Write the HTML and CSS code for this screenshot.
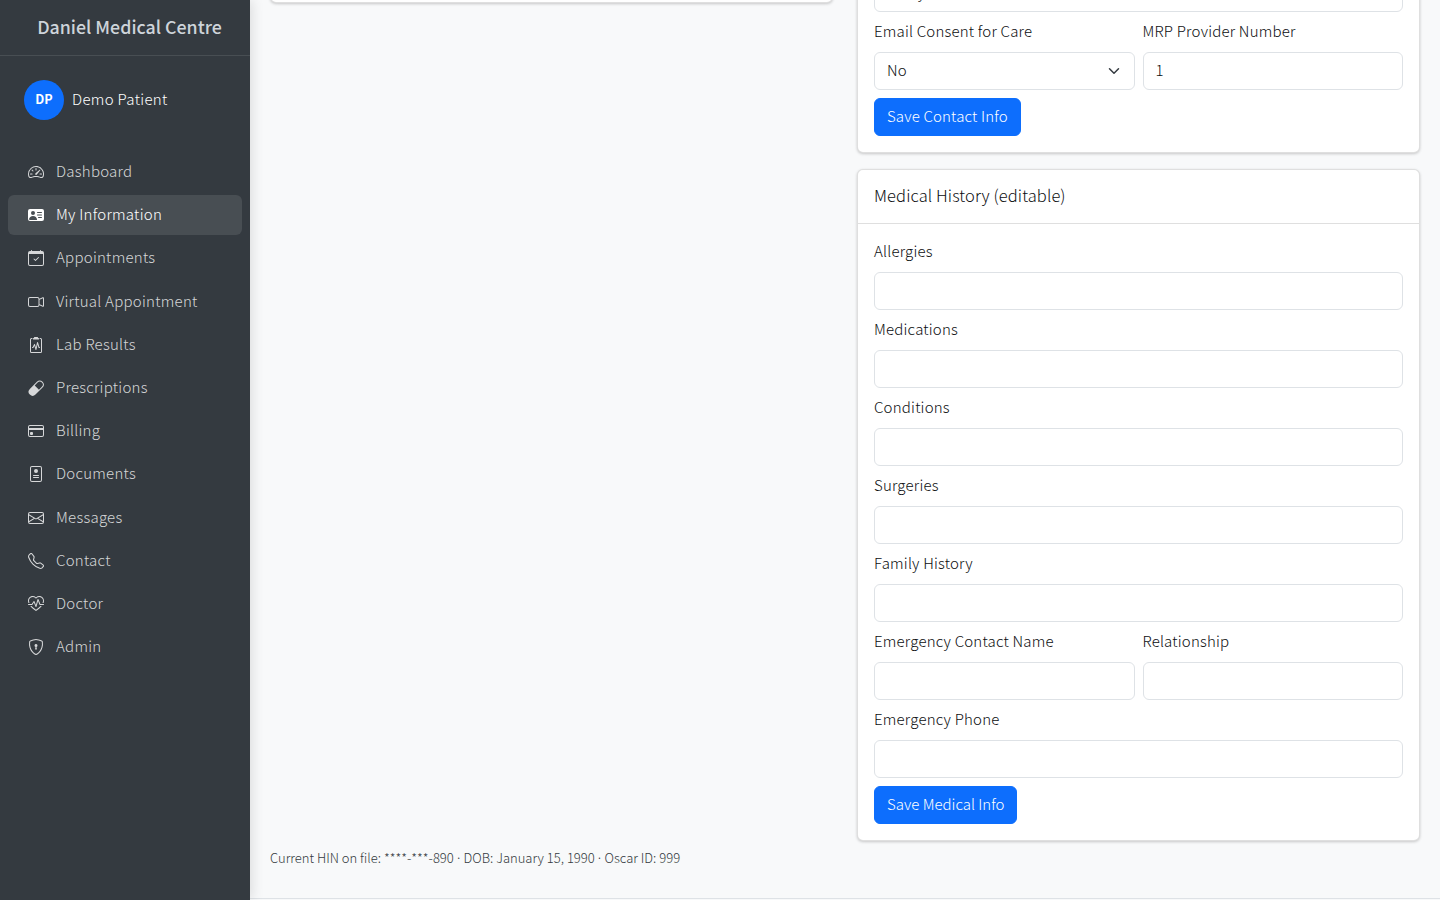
FILE: index.html
```html
<!DOCTYPE html>
<html lang="en">
<head>
    <meta charset="UTF-8">
    <meta name="viewport" content="width=device-width, initial-scale=1.0">
    <title>My Information</title>
    <link rel="stylesheet" href="styles.css">
</head>
<body>
    <aside class="sidebar">
        <div class="brand">Daniel Medical Centre</div>
        <div class="user">
            <div class="avatar">DP</div>
            <span class="user-name">Demo Patient</span>
        </div>
        <nav class="nav">
            <a class="nav-link" href="#">
                <svg class="icon" viewBox="0 0 16 16"><path d="M8 4a.5.5 0 0 1 .5.5V6a.5.5 0 0 1-1 0V4.5A.5.5 0 0 1 8 4zM3.732 5.732a.5.5 0 0 1 .707 0l.915.914a.5.5 0 1 1-.708.708l-.914-.915a.5.5 0 0 1 0-.707zM2 10a.5.5 0 0 1 .5-.5h1.586a.5.5 0 0 1 0 1H2.5A.5.5 0 0 1 2 10zm9.5 0a.5.5 0 0 1 .5-.5h1.5a.5.5 0 0 1 0 1H12a.5.5 0 0 1-.5-.5zm.754-4.246a.389.389 0 0 0-.527-.02L7.547 9.31a.91.91 0 1 0 1.302 1.258l3.434-4.297a.389.389 0 0 0-.029-.518z"/><path fill-rule="evenodd" d="M0 10a8 8 0 1 1 15.547 2.661c-.442 1.253-1.845 1.602-2.932 1.25C11.309 13.488 9.475 13 8 13c-1.474 0-3.31.488-4.615.911-1.087.352-2.49.003-2.932-1.25A7.988 7.988 0 0 1 0 10zm8-7a7 7 0 0 0-6.603 9.329c.203.575.923.876 1.68.63C4.397 12.533 6.358 12 8 12s3.604.532 4.923.96c.757.245 1.477-.056 1.68-.631A7 7 0 0 0 8 3z"/></svg>
                Dashboard
            </a>
            <a class="nav-link active" href="#">
                <svg class="icon" viewBox="0 0 16 16"><path d="M0 4a2 2 0 0 1 2-2h12a2 2 0 0 1 2 2v8a2 2 0 0 1-2 2H2a2 2 0 0 1-2-2V4Zm9 1.5a.5.5 0 0 0 .5.5h4a.5.5 0 0 0 0-1h-4a.5.5 0 0 0-.5.5ZM9 8a.5.5 0 0 0 .5.5h4a.5.5 0 0 0 0-1h-4A.5.5 0 0 0 9 8Zm1 2.5a.5.5 0 0 0 .5.5h3a.5.5 0 0 0 0-1h-3a.5.5 0 0 0-.5.5Zm-1 2C9 10.567 7.21 9 5 9c-2.086 0-3.8 1.398-3.984 3.181A1 1 0 0 0 2 13h6.96c.026-.163.04-.33.04-.5ZM7 6a2 2 0 1 0-4 0 2 2 0 0 0 4 0Z"/></svg>
                My Information
            </a>
            <a class="nav-link" href="#">
                <svg class="icon" viewBox="0 0 16 16"><path d="M10.854 7.146a.5.5 0 0 1 0 .708l-3 3a.5.5 0 0 1-.708 0l-1.5-1.5a.5.5 0 1 1 .708-.708L7.5 9.793l2.646-2.647a.5.5 0 0 1 .708 0z"/><path d="M3.5 0a.5.5 0 0 1 .5.5V1h8V.5a.5.5 0 0 1 1 0V1h1a2 2 0 0 1 2 2v11a2 2 0 0 1-2 2H2a2 2 0 0 1-2-2V3a2 2 0 0 1 2-2h1V.5a.5.5 0 0 1 .5-.5zM1 4v10a1 1 0 0 0 1 1h12a1 1 0 0 0 1-1V4H1z"/></svg>
                Appointments
            </a>
            <a class="nav-link" href="#">
                <svg class="icon" viewBox="0 0 16 16"><path fill-rule="evenodd" d="M0 5a2 2 0 0 1 2-2h7.5a2 2 0 0 1 1.983 1.738l3.11-1.382A1 1 0 0 1 16 4.269v7.462a1 1 0 0 1-1.406.913l-3.111-1.382A2 2 0 0 1 9.5 13H2a2 2 0 0 1-2-2V5zm11.5 5.175 3.5 1.556V4.269l-3.5 1.556v4.35zM2 4a1 1 0 0 0-1 1v6a1 1 0 0 0 1 1h7.5a1 1 0 0 0 1-1V5a1 1 0 0 0-1-1H2z"/></svg>
                Virtual Appointment
            </a>
            <a class="nav-link" href="#">
                <svg class="icon" viewBox="0 0 16 16"><path d="M9.5 0a.5.5 0 0 1 .5.5.5.5 0 0 0 .5.5.5.5 0 0 1 .5.5V2a.5.5 0 0 1-.5.5h-5A.5.5 0 0 1 5 2v-.5a.5.5 0 0 1 .5-.5.5.5 0 0 0 .5-.5.5.5 0 0 1 .5-.5h3Z"/><path d="M3 2.5a.5.5 0 0 1 .5-.5H4a.5.5 0 0 0 0-1h-.5A1.5 1.5 0 0 0 2 2.5v12A1.5 1.5 0 0 0 3.5 16h9a1.5 1.5 0 0 0 1.5-1.5v-12A1.5 1.5 0 0 0 12.5 1H12a.5.5 0 0 0 0 1h.5a.5.5 0 0 1 .5.5v12a.5.5 0 0 1-.5.5h-9a.5.5 0 0 1-.5-.5v-12Z"/><path d="M9.979 5.356a.5.5 0 0 0-.968.04L7.92 10.49l-.94-3.135a.5.5 0 0 0-.926-.08L4.69 10H4.5a.5.5 0 0 0 0 1H5a.5.5 0 0 0 .447-.276l.936-1.873 1.138 3.793a.5.5 0 0 0 .968-.04L9.58 7.51l.94 3.135A.5.5 0 0 0 11 11h.5a.5.5 0 0 0 0-1h-.128L9.979 5.356Z"/></svg>
                Lab Results
            </a>
            <a class="nav-link" href="#">
                <svg class="icon" viewBox="0 0 16 16"><path d="M1.828 8.9 8.9 1.827a4 4 0 1 1 5.657 5.657l-7.07 7.071A4 4 0 1 1 1.827 8.9Zm9.128.771 2.893-2.893a3 3 0 1 0-4.243-4.242L6.713 5.429l4.243 4.242Z"/></svg>
                Prescriptions
            </a>
            <a class="nav-link" href="#">
                <svg class="icon" viewBox="0 0 16 16"><path d="M0 4a2 2 0 0 1 2-2h12a2 2 0 0 1 2 2v8a2 2 0 0 1-2 2H2a2 2 0 0 1-2-2V4zm2-1a1 1 0 0 0-1 1v1h14V4a1 1 0 0 0-1-1H2zm13 4H1v5a1 1 0 0 0 1 1h12a1 1 0 0 0 1-1V7z"/><path d="M2 10a1 1 0 0 1 1-1h1a1 1 0 0 1 1 1v1a1 1 0 0 1-1 1H3a1 1 0 0 1-1-1v-1z"/></svg>
                Billing
            </a>
            <a class="nav-link" href="#">
                <svg class="icon" viewBox="0 0 16 16"><path d="M8 7a2 2 0 1 0 0-4 2 2 0 0 0 0 4ZM5.5 9a.5.5 0 0 0 0 1h5a.5.5 0 0 0 0-1h-5zm0 2a.5.5 0 0 0 0 1h5a.5.5 0 0 0 0-1h-5z"/><path d="M2 2a2 2 0 0 1 2-2h8a2 2 0 0 1 2 2v12a2 2 0 0 1-2 2H4a2 2 0 0 1-2-2V2zm10-1H4a1 1 0 0 0-1 1v12a1 1 0 0 0 1 1h8a1 1 0 0 0 1-1V2a1 1 0 0 0-1-1z"/></svg>
                Documents
            </a>
            <a class="nav-link" href="#">
                <svg class="icon" viewBox="0 0 16 16"><path d="M0 4a2 2 0 0 1 2-2h12a2 2 0 0 1 2 2v8a2 2 0 0 1-2 2H2a2 2 0 0 1-2-2V4Zm2-1a1 1 0 0 0-1 1v.217l7 4.2 7-4.2V4a1 1 0 0 0-1-1H2Zm13 2.383-4.708 2.825L15 11.105V5.383Zm-.034 6.876-5.64-3.471L8 9.583l-1.326-.795-5.64 3.47A1 1 0 0 0 2 13h12a1 1 0 0 0 .966-.741ZM1 11.105l4.708-2.897L1 5.383v5.722Z"/></svg>
                Messages
            </a>
            <a class="nav-link" href="#">
                <svg class="icon" viewBox="0 0 16 16"><path d="M3.654 1.328a.678.678 0 0 0-1.015-.063L1.605 2.3c-.483.484-.661 1.169-.45 1.77a17.568 17.568 0 0 0 4.168 6.608 17.569 17.569 0 0 0 6.608 4.168c.601.211 1.286.033 1.77-.45l1.034-1.034a.678.678 0 0 0-.063-1.015l-2.307-1.794a.678.678 0 0 0-.58-.122l-2.19.547a1.745 1.745 0 0 1-1.657-.459L5.482 8.062a1.745 1.745 0 0 1-.46-1.657l.548-2.19a.678.678 0 0 0-.122-.58L3.654 1.328zM1.884.511a1.745 1.745 0 0 1 2.612.163L6.29 2.98c.329.423.445.974.315 1.494l-.547 2.19a.678.678 0 0 0 .178.643l2.457 2.457a.678.678 0 0 0 .644.178l2.189-.547a1.745 1.745 0 0 1 1.494.315l2.306 1.794c.829.645.905 1.87.163 2.611l-1.034 1.034c-.74.74-1.846 1.065-2.877.702a18.634 18.634 0 0 1-7.01-4.42 18.634 18.634 0 0 1-4.42-7.009c-.362-1.03-.037-2.137.703-2.877L1.885.511z"/></svg>
                Contact
            </a>
            <a class="nav-link" href="#">
                <svg class="icon" viewBox="0 0 16 16"><path d="m8 2.748-.717-.737C5.6.281 2.514.878 1.4 3.053.918 3.995.78 5.323 1.508 7H.43c-2.128-5.697 4.165-8.83 7.394-5.857.06.055.119.112.176.171a3.12 3.12 0 0 1 .176-.17c3.23-2.974 9.522.159 7.394 5.856h-1.078c.728-1.677.59-3.005.108-3.947C13.486.878 10.4.28 8.717 2.01L8 2.748ZM2.212 10h1.315C4.593 11.183 6.05 12.458 8 13.795c1.949-1.337 3.407-2.612 4.473-3.795h1.315c-1.265 1.566-3.14 3.25-5.788 5-2.648-1.75-4.523-3.434-5.788-5Z"/><path d="M10.464 3.314a.5.5 0 0 0-.945.049L7.921 8.956 6.464 5.314a.5.5 0 0 0-.88-.091L3.732 8H.5a.5.5 0 0 0 0 1H4a.5.5 0 0 0 .416-.223l1.473-2.209 1.647 4.118a.5.5 0 0 0 .945-.049l1.598-5.593 1.457 3.642A.5.5 0 0 0 12 9h3.5a.5.5 0 0 0 0-1h-3.162l-1.874-4.686Z"/></svg>
                Doctor
            </a>
            <a class="nav-link" href="#">
                <svg class="icon" viewBox="0 0 16 16"><path d="M5.338 1.59a61.44 61.44 0 0 0-2.837.856.481.481 0 0 0-.328.39c-.554 4.157.726 7.19 2.253 9.188a10.725 10.725 0 0 0 2.287 2.233c.346.244.652.42.893.533.12.057.218.095.293.118a.55.55 0 0 0 .101.025.615.615 0 0 0 .1-.025c.076-.023.174-.061.294-.118.24-.113.547-.29.893-.533a10.726 10.726 0 0 0 2.287-2.233c1.527-1.997 2.807-5.031 2.253-9.188a.48.48 0 0 0-.328-.39c-.651-.213-1.75-.56-2.837-.855C9.552 1.29 8.531 1.067 8 1.067c-.53 0-1.552.223-2.662.524zM5.072.56C6.157.265 7.31 0 8 0s1.843.265 2.928.56c1.11.3 2.229.655 2.887.87a1.54 1.54 0 0 1 1.044 1.262c.596 4.477-.787 7.795-2.465 9.99a11.775 11.775 0 0 1-2.517 2.453 7.159 7.159 0 0 1-1.048.625c-.28.132-.581.24-.829.24s-.548-.108-.829-.24a7.158 7.158 0 0 1-1.048-.625 11.777 11.777 0 0 1-2.517-2.453C1.928 10.487.545 7.169 1.141 2.692A1.54 1.54 0 0 1 2.185 1.43 62.456 62.456 0 0 1 5.072.56z"/><path d="M9.5 6.5a1.5 1.5 0 0 1-1 1.415l.385 1.99a.5.5 0 0 1-.491.595h-.788a.5.5 0 0 1-.49-.595l.384-1.99a1.5 1.5 0 1 1 2-1.415z"/></svg>
                Admin
            </a>
        </nav>
    </aside>

    <main class="main">
        <div class="columns">
            <div class="column">
                <div class="card card-left"></div>
            </div>
            <div class="column">
                <div class="card card-contact">
                    <div class="card-body">
                        <input class="field cut-field" type="text" value="Emily" readonly>
                        <div class="row">
                            <div class="group">
                                <label class="label">Email Consent for Care</label>
                                <div class="select">
                                    <span>No</span>
                                    <svg class="chevron" viewBox="0 0 16 16"><path fill="none" stroke="#343a40" stroke-linecap="round" stroke-linejoin="round" stroke-width="2" d="m2 5 6 6 6-6"/></svg>
                                </div>
                            </div>
                            <div class="group">
                                <label class="label">MRP Provider Number</label>
                                <input class="field" type="text" value="1" readonly>
                            </div>
                        </div>
                        <button class="btn btn-contact">Save Contact Info</button>
                    </div>
                </div>
                <div class="card">
                    <div class="card-header">Medical History (editable)</div>
                    <div class="card-body">
                        <div class="group">
                            <label class="label">Allergies</label>
                            <input class="field" type="text">
                        </div>
                        <div class="group">
                            <label class="label">Medications</label>
                            <input class="field" type="text">
                        </div>
                        <div class="group">
                            <label class="label">Conditions</label>
                            <input class="field" type="text">
                        </div>
                        <div class="group">
                            <label class="label">Surgeries</label>
                            <input class="field" type="text">
                        </div>
                        <div class="group">
                            <label class="label">Family History</label>
                            <input class="field" type="text">
                        </div>
                        <div class="row">
                            <div class="group">
                                <label class="label">Emergency Contact Name</label>
                                <input class="field" type="text">
                            </div>
                            <div class="group">
                                <label class="label">Relationship</label>
                                <input class="field" type="text">
                            </div>
                        </div>
                        <div class="group">
                            <label class="label">Emergency Phone</label>
                            <input class="field" type="text">
                        </div>
                        <button class="btn">Save Medical Info</button>
                    </div>
                </div>
            </div>
        </div>
        <p class="hin-note">Current HIN on file: ****-***-890 <span class="dot">·</span> DOB: January 15, 1990 <span class="dot">·</span> Oscar ID: 999</p>
    </main>
</body>
</html>
```

FILE: styles.css
```css
* {
    box-sizing: border-box;
}
html, body {
    height: 100%;
}
body {
    margin: 0;
    display: flex;
    overflow: hidden;
    font-family: "Noto Sans CJK JP", "Noto Sans", sans-serif;
    font-size: 15px;
    font-weight: 300;
    line-height: 24px;
    letter-spacing: 0.2px;
    color: #0c0e10;
    background-color: #f8f9fa;
}

/* sidebar */
.sidebar {
    width: 250px;
    flex-shrink: 0;
    height: 900px;
    background-color: #343a40;
    box-shadow: 2px 0 12px rgba(0, 0, 0, 0.12);
    position: relative;
}
.brand {
    height: 56px;
    padding: 11px 16px 12px 25px;
    text-align: center;
    font-size: 17.8px;
    font-weight: 500;
    line-height: 30px;
    letter-spacing: 0;
    color: #ced4da;
    border-bottom: 1px solid rgba(255, 255, 255, 0.1);
}
.user {
    display: flex;
    align-items: center;
    gap: 8px;
    padding: 24px;
}
.avatar {
    width: 40px;
    height: 40px;
    padding-bottom: 2px;
    border-radius: 50%;
    background-color: #0d6efd;
    color: #fff;
    font-size: 12.6px;
    font-weight: 700;
    letter-spacing: 0;
    display: flex;
    align-items: center;
    justify-content: center;
}
.user-name {
    margin-top: -2px;
    color: #fff;
    letter-spacing: 0.33px;
}
.nav {
    display: flex;
    flex-direction: column;
    gap: 3.2px;
    padding: 8px 8px 0;
}
.nav-link {
    display: flex;
    align-items: center;
    gap: 12px;
    height: 40px;
    padding: 0 20px 2px;
    border-radius: 6px;
    letter-spacing: 0.25px;
    color: rgba(255, 255, 255, 0.8);
    text-decoration: none;
}
.nav-link.active {
    color: #fff;
    background-color: rgba(255, 255, 255, 0.1);
}
.icon {
    width: 16px;
    height: 16px;
    margin-top: 2px;
    flex-shrink: 0;
    fill: currentColor;
}

/* main area */
.main {
    flex: 1;
    height: 899px;
    padding: 0 20px;
    border-bottom: 1px solid #dee2e6;
    overflow: hidden;
}
.columns {
    display: grid;
    grid-template-columns: 1fr 1fr;
    gap: 24px;
    align-items: start;
}
.column {
    display: flex;
    flex-direction: column;
    gap: 16px;
}
.card {
    background-color: #fff;
    border: 1px solid rgba(0, 0, 0, 0.125);
    border-radius: 6px;
    box-shadow: 0 1px 3px rgba(0, 0, 0, 0.2);
}
.card-left {
    height: 20px;
    margin-top: -17px;
}
.card-contact {
    margin-top: -43px;
}
.card-header {
    padding: 11px 16px 13px;
    font-size: 16.5px;
    line-height: 29px;
    letter-spacing: 0.1px;
    border-bottom: 1px solid rgba(0, 0, 0, 0.125);
}
.card-body {
    padding: 16px;
}
.hin-note {
    margin: 6px 0 0;
    font-size: 13px;
    line-height: 21px;
    letter-spacing: 0;
    color: #343a40;
}
.dot {
    margin: 0 -1.5px;
}
.group {
    margin-bottom: 8px;
}
.row {
    display: grid;
    grid-template-columns: 1fr 1fr;
    gap: 8px;
}
.label {
    display: block;
    margin: -1px 0 9px;
}
.field, .select {
    display: block;
    width: 100%;
    height: 38px;
    padding: 4px 12px 7px;
    font: inherit;
    letter-spacing: inherit;
    color: #0c0e10;
    background-color: #fff;
    border: 1px solid #dee2e6;
    border-radius: 6px;
}
.cut-field {
    margin-bottom: 8px;
}
.select {
    display: flex;
    align-items: center;
    justify-content: space-between;
}
.chevron {
    width: 16px;
    height: 12px;
    margin-top: 3px;
}
.btn {
    display: block;
    height: 38px;
    padding: 4px 12px 6px;
    font: inherit;
    letter-spacing: 0;
    color: #fff;
    background-color: #0d6efd;
    border: 1px solid #0d6efd;
    border-radius: 6px;
}
.btn-contact {
    letter-spacing: 0.16px;
}
```
